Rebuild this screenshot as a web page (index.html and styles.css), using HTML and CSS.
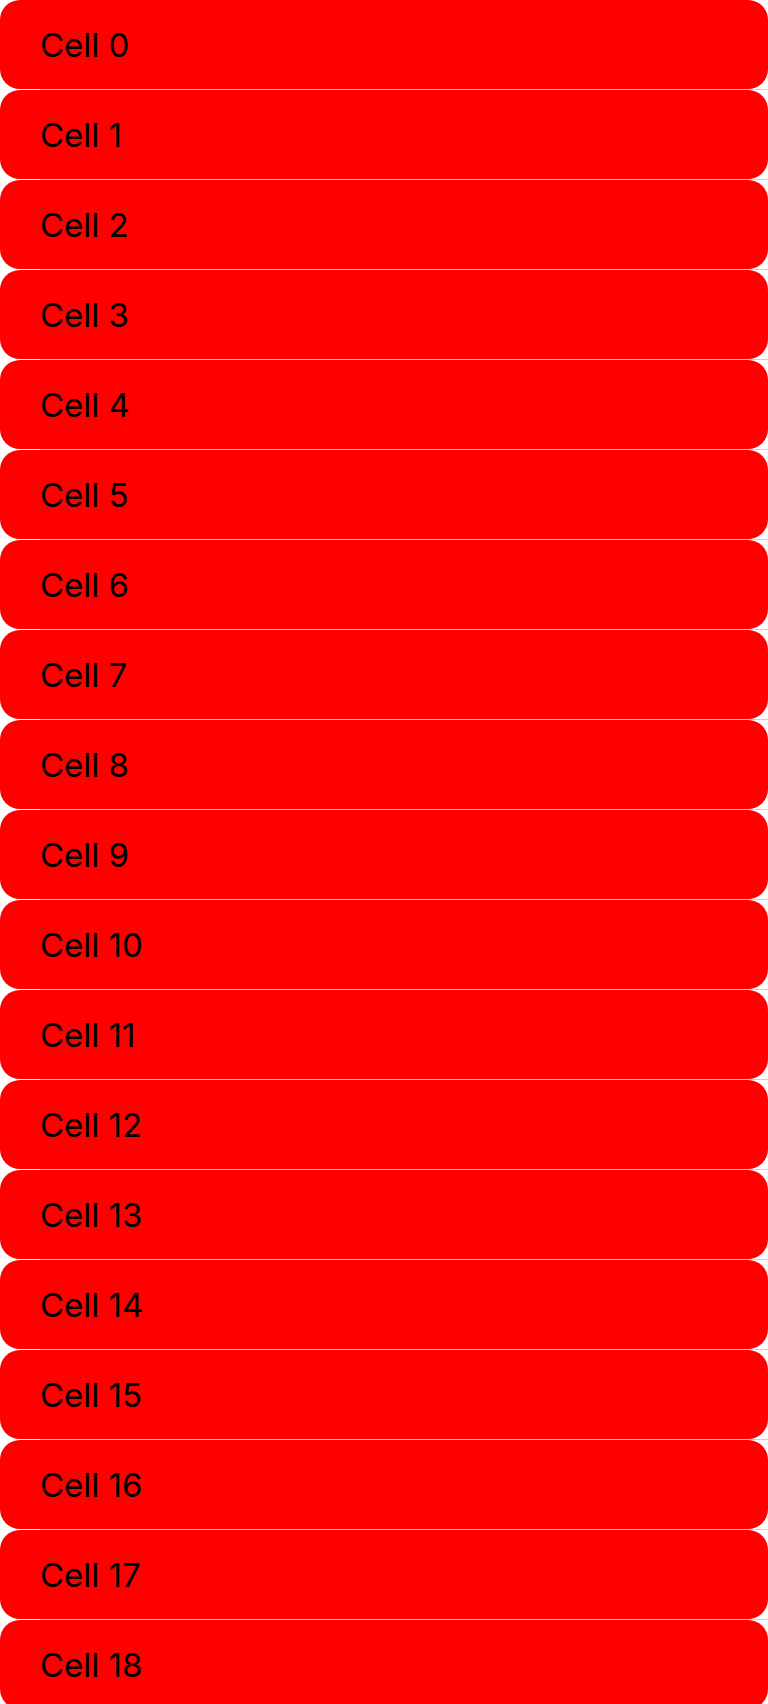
FILE: index.html
```html
<!DOCTYPE html>
<html>
<head>
<meta charset="utf-8">
<link rel="stylesheet" href="styles.css">
</head>
<body>
<div class="list">
  <div class="row"><div class="cell">Cell 0</div><div class="sep"></div></div>
  <div class="row"><div class="cell">Cell 1</div><div class="sep"></div></div>
  <div class="row"><div class="cell">Cell 2</div><div class="sep"></div></div>
  <div class="row"><div class="cell">Cell 3</div><div class="sep"></div></div>
  <div class="row"><div class="cell">Cell 4</div><div class="sep"></div></div>
  <div class="row"><div class="cell">Cell 5</div><div class="sep"></div></div>
  <div class="row"><div class="cell">Cell 6</div><div class="sep"></div></div>
  <div class="row"><div class="cell">Cell 7</div><div class="sep"></div></div>
  <div class="row"><div class="cell">Cell 8</div><div class="sep"></div></div>
  <div class="row"><div class="cell">Cell 9</div><div class="sep"></div></div>
  <div class="row"><div class="cell">Cell 10</div><div class="sep"></div></div>
  <div class="row"><div class="cell">Cell 11</div><div class="sep"></div></div>
  <div class="row"><div class="cell">Cell 12</div><div class="sep"></div></div>
  <div class="row"><div class="cell">Cell 13</div><div class="sep"></div></div>
  <div class="row"><div class="cell">Cell 14</div><div class="sep"></div></div>
  <div class="row"><div class="cell">Cell 15</div><div class="sep"></div></div>
  <div class="row"><div class="cell">Cell 16</div><div class="sep"></div></div>
  <div class="row"><div class="cell">Cell 17</div><div class="sep"></div></div>
  <div class="row"><div class="cell">Cell 18</div><div class="sep"></div></div>
</div>
</body>
</html>
```
FILE: styles.css
```css
html, body {
  margin: 0;
  padding: 0;
  background: #ffffff;
  overflow: hidden;
}
.list {
  display: flex;
  flex-direction: column;
  width: 768px;
}
.row {
  display: flex;
  flex-direction: column;
  height: 90px;
}
.cell {
  height: 89px;
  background: #ff0000;
  border-radius: 20px;
  display: flex;
  align-items: center;
  padding-left: 40px;
  font-family: Inter, "Liberation Sans", Arial, sans-serif;
  font-size: 33px;
  letter-spacing: 0;
  color: #000000;
  box-sizing: border-box;
}
.sep {
  height: 1px;
  margin-left: 40px;
  background: #d1d1d6;
}
```
